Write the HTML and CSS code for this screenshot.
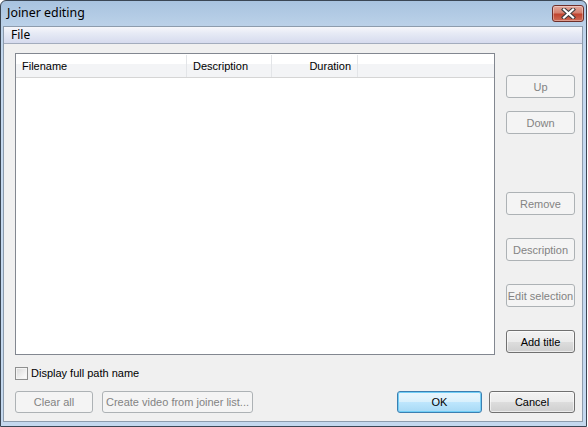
FILE: index.html
```html
<!DOCTYPE html>
<html>
<head>
<meta charset="utf-8">
<link rel="stylesheet" href="styles.css">
<title>Joiner editing</title>
</head>
<body>
<div class="window">
  <div class="titlebar">
    <span class="title">Joiner editing</span>
    <div class="close">
      <svg width="17" height="11" viewBox="0 0 17 11">
        <path d="M4 1.5 L13 9.5 M13 1.5 L4 9.5" stroke="#3b3b3b" stroke-width="4.2" stroke-linecap="square"/>
        <path d="M4 1.5 L13 9.5 M13 1.5 L4 9.5" stroke="#ffffff" stroke-width="2.2" stroke-linecap="square"/>
      </svg>
    </div>
  </div>
  <div class="client">
    <div class="menubar"><span class="menu-item">File</span></div>
    <div class="content">
      <div class="main">
        <div class="listbox">
          <div class="header">
            <div class="col col-file">Filename</div>
            <div class="col col-desc">Description</div>
            <div class="col col-dur">Duration</div>
          </div>
        </div>
        <div class="side">
          <button class="btn disabled b-up">Up</button>
          <button class="btn disabled b-down">Down</button>
          <button class="btn disabled b-remove">Remove</button>
          <button class="btn disabled b-desc">Description</button>
          <button class="btn disabled b-edit">Edit selection</button>
          <button class="btn b-add">Add title</button>
        </div>
      </div>
      <label class="check"><span class="box"></span>Display full path name</label>
      <div class="bottom">
        <button class="btn disabled b-clear">Clear all</button>
        <button class="btn disabled b-create">Create video from joiner list...</button>
        <div class="spacer"></div>
        <button class="btn default b-ok">OK</button>
        <button class="btn b-cancel">Cancel</button>
      </div>
    </div>
  </div>
</div>
</body>
</html>
```

FILE: styles.css
```css
html, body {
  margin: 0;
  padding: 0;
  background: #ffffff;
}
body {
  width: 588px;
  height: 427px;
  overflow: hidden;
  font-family: "Liberation Sans", Arial, sans-serif;
  font-size: 11px;
  color: #000;
}
.window {
  box-sizing: border-box;
  width: 587px;
  height: 427px;
  border: 1px solid #3a4654;
  border-radius: 6px 6px 0 0;
  background: linear-gradient(to bottom, #a8c3df 0px, #bcd2e9 26px, #c4d8ee 60px, #c4d8ee 100%);
  display: flex;
  flex-direction: column;
}
.titlebar {
  height: 25px;
  display: flex;
  align-items: flex-start;
  flex-shrink: 0;
}
.title {
  font-family: "Noto Sans", "Open Sans", sans-serif;
  font-size: 12.4px;
  color: #000;
  margin: 4px 0 0 6px;
  line-height: 16px;
}
.close {
  margin: 4px 2px 0 auto;
  width: 30px;
  height: 15px;
  border: 1px solid #6e2f2a;
  border-radius: 3px;
  background: linear-gradient(to bottom, #e3a89c 0%, #d5816f 45%, #c0442f 55%, #cf6b55 100%);
  display: flex;
  align-items: center;
  justify-content: center;
  box-shadow: inset 0 0 0 1px rgba(255,255,255,0.35);
}
.close svg { display: block; }
.client {
  flex: 1;
  margin: 0 3px 4px 2px;
  border: 1px solid #8d9cad;
  background: #f0f0f0;
  display: flex;
  flex-direction: column;
}
.menubar {
  height: 16px;
  border-bottom: 1px solid #a3acbd;
  background: linear-gradient(to bottom, #f6f7fb 0%, #e6eaf5 40%, #d6dbee 100%);
  display: flex;
  align-items: center;
}
.menu-item {
  font-family: "Noto Sans", "Open Sans", sans-serif;
  font-size: 12px;
  margin-left: 7px;
  line-height: 16px;
}
.content {
  flex: 1;
  padding: 9px 0 0 11px;
  display: flex;
  flex-direction: column;
}
.main {
  display: flex;
  gap: 11px;
}
.listbox {
  flex-shrink: 0;
  width: 480px;
  height: 302px;
  box-sizing: border-box;
  border: 1px solid #828790;
  background: #ffffff;
  padding-top: 1px;
}
.header {
  display: flex;
  height: 22px;
  border-bottom: 1px solid #d5d5d5;
  background: linear-gradient(to bottom, #ffffff 0%, #ffffff 40%, #f3f4f6 41%, #f3f4f6 100%);
}
.col {
  height: 22px;
  line-height: 22px;
  border-right: 1px solid #e3e5e8;
  box-sizing: border-box;
  padding: 0 6px;
  white-space: nowrap;
}
.col-file { width: 171px; }
.col-desc { width: 85px; }
.col-dur { width: 86px; text-align: right; }
.side {
  flex-shrink: 0;
  display: flex;
  flex-direction: column;
  width: 69px;
}
.btn {
  font-family: "Liberation Sans", Arial, sans-serif;
  font-size: 11px;
  font-weight: normal;
  height: 23px;
  box-sizing: border-box;
  border: 1px solid #707070;
  border-radius: 3px;
  background: linear-gradient(to bottom, #f2f2f2 0%, #ebebeb 50%, #dddddd 51%, #cfcfcf 100%);
  box-shadow: inset 0 0 0 1px rgba(255,255,255,0.6);
  color: #000;
  padding: 0;
  margin: 0;
  white-space: nowrap;
  flex-shrink: 0;
}
.btn.disabled {
  border-color: #adb2b5;
  background: #f4f4f4;
  color: #838383;
  box-shadow: none;
}
.btn.default {
  border-color: #3c7fb1;
  background: linear-gradient(to bottom, #eaf6fd 0%, #d9f0fc 50%, #bee6fd 51%, #a7d9f5 100%);
  box-shadow: inset 0 0 0 1px #72cef6;
}
.side .btn { width: 69px; }
.b-up { margin-top: 22px; }
.b-down { margin-top: 13px; }
.b-remove { margin-top: 58px; }
.b-desc { margin-top: 23px; }
.b-edit { margin-top: 23px; }
.b-add { margin-top: 23px; }
.check {
  display: flex;
  align-items: center;
  margin-top: 11px;
  height: 14px;
  line-height: 14px;
}
.box {
  width: 11px;
  height: 11px;
  border: 1px solid #8e8f8f;
  background: linear-gradient(135deg, #d8d8d8 0%, #f4f4f4 70%, #ffffff 100%);
  box-shadow: inset 0 0 0 1px #f4f4f4;
  margin-right: 3px;
}
.bottom {
  display: flex;
  margin-top: 11px;
  width: 560px;
  height: 22px;
}
.bottom .btn { height: 22px; }
.b-clear { width: 78px; }
.b-create { width: 151px; margin-left: 9px; }
.spacer { flex: 1; }
.b-ok { width: 85px; }
.b-cancel { width: 86px; margin-left: 7px; }
```
